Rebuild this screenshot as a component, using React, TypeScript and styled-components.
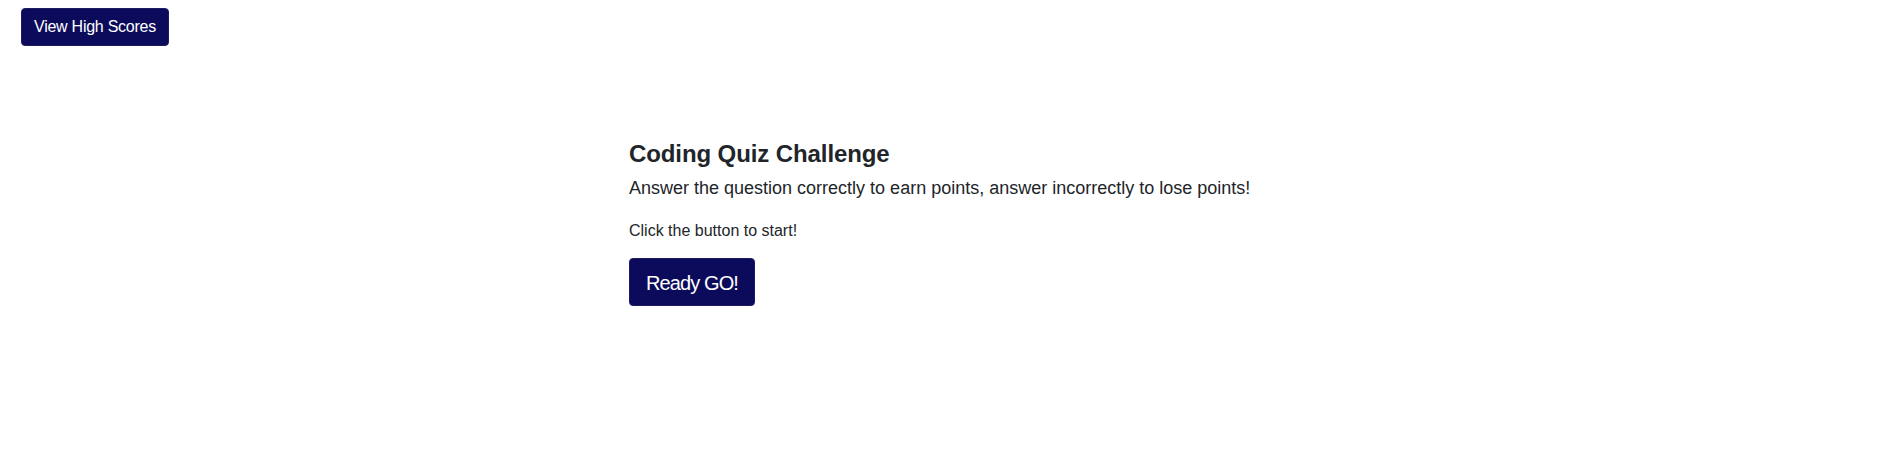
import React from "react";
import styled, { createGlobalStyle } from "styled-components";

const GlobalStyle = createGlobalStyle`
  html, body {
    margin: 0;
    padding: 0;
    background: #ffffff;
  }
  body {
    font-family: "Liberation Sans", Arial, sans-serif;
    color: #212529;
    -webkit-font-smoothing: antialiased;
  }
  * { box-sizing: border-box; }
`;

const Header = styled.header`
  display: flex;
  padding: 8px 0 0 21px;
`;

const Button = styled.button<{ $size?: "md" | "lg" }>`
  display: inline-block;
  font-family: "Liberation Sans", Arial, sans-serif;
  background: #0c0b5b;
  color: #ffffff;
  border: 1px solid #1d1c63;
  border-radius: 4px;
  cursor: pointer;
  font-weight: 400;
  font-size: ${(p) => (p.$size === "lg" ? "20px" : "16px")};
  line-height: ${(p) => (p.$size === "lg" ? "30px" : "24px")};
  letter-spacing: ${(p) => (p.$size === "lg" ? "-0.9px" : "-0.25px")};
  padding: ${(p) => (p.$size === "lg" ? "9px 16px 7px" : "6px 12px")};
`;

const Main = styled.main`
  width: 620px;
  margin: 93px auto 0;
  display: flex;
  flex-direction: column;
  align-items: flex-start;
`;

const Title = styled.h1`
  margin: 0 0 7px;
  font-size: 24px;
  line-height: 29px;
  font-weight: 700;
  letter-spacing: -0.1px;
  color: #212529;
`;

const Lead = styled.p`
  margin: 0 0 17px;
  font-size: 18px;
  line-height: 27px;
  font-weight: 400;
  white-space: nowrap;
`;

const Note = styled.p`
  margin: 0 0 15px;
  font-size: 16px;
  line-height: 24px;
`;

export default function App() {
  return (
    <>
      <GlobalStyle />
      <Header>
        <Button>View High Scores</Button>
      </Header>
      <Main>
        <Title>Coding Quiz Challenge</Title>
        <Lead>
          Answer the question correctly to earn points, answer incorrectly to
          lose points!
        </Lead>
        <Note>Click the button to start!</Note>
        <Button $size="lg">Ready GO!</Button>
      </Main>
    </>
  );
}
